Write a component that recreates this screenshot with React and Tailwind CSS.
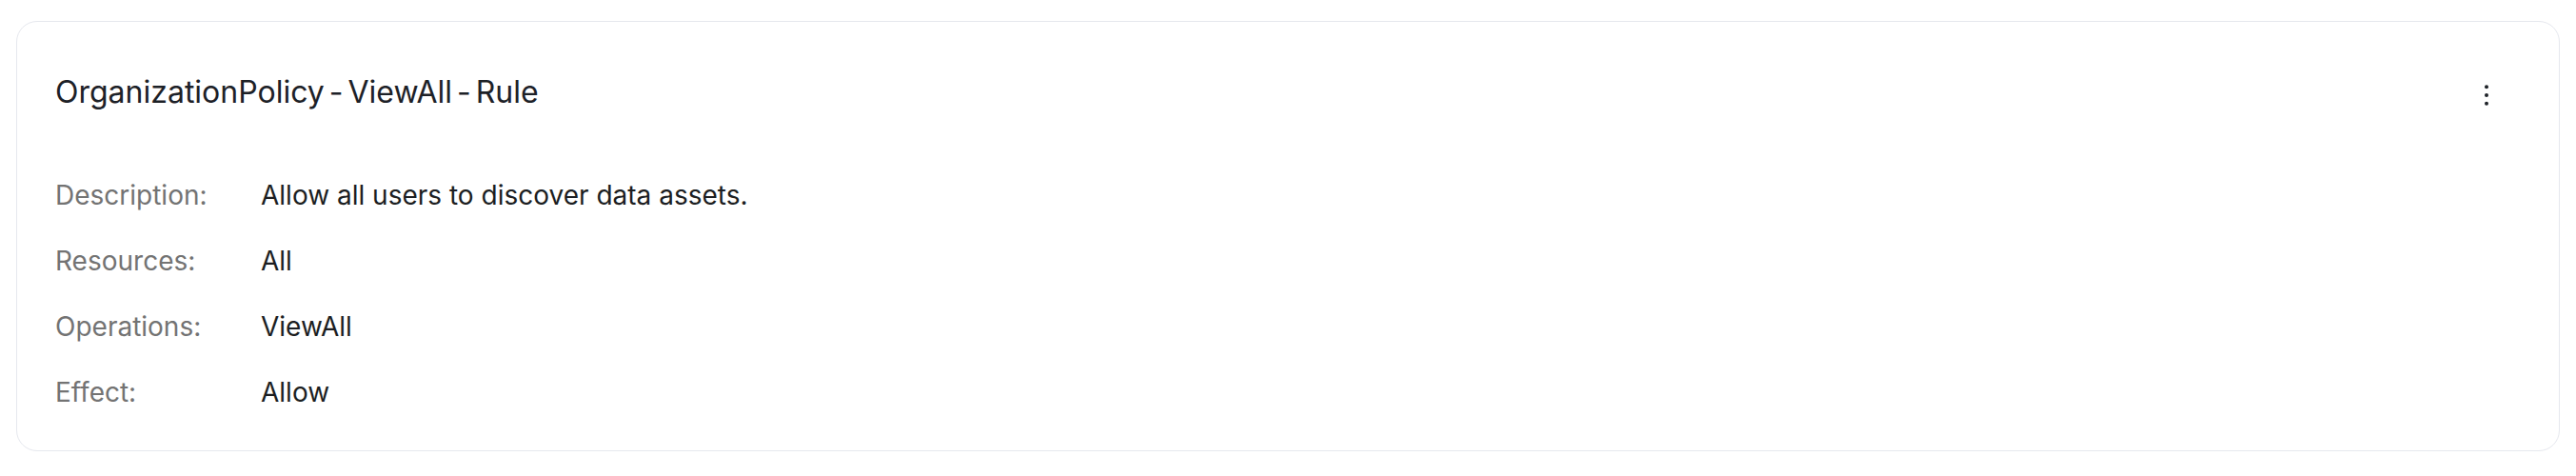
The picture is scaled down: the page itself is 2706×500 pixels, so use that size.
import { useState } from 'react';

const rule = {
  name: ['OrganizationPolicy', 'ViewAll', 'Rule'],
  description: 'Allow all users to discover data assets.',
  resources: 'All',
  operations: 'ViewAll',
  effect: 'Allow',
};

function KebabIcon() {
  return (
    <svg width="20" height="28" viewBox="0 0 20 28" fill="#1f2329">
      <circle cx="10" cy="5.3" r="2" />
      <circle cx="10" cy="14" r="2" />
      <circle cx="10" cy="22.7" r="2" />
    </svg>
  );
}

function Field({ label, value }) {
  return (
    <div className="flex items-center h-[36px] text-[28px] leading-[36px]">
      <span className="w-[216px] shrink-0 text-[#737373]">{label}</span>
      <span className="text-[#1c1e22]">{value}</span>
    </div>
  );
}

export default function App() {
  const [menuOpen, setMenuOpen] = useState(false);

  return (
    <div className="min-h-[500px] bg-white px-[17px] pt-[22px] font-['Inter','Noto_Sans',sans-serif]">
      <div className="border border-[#e6e8ee] rounded-[22px] px-10 pt-10 pb-[43px] bg-white">
        {/* Header */}
        <div className="flex items-center justify-between h-[67px]">
          <h2 className="text-[32px] leading-[38px] font-normal text-[#1d2127]">
            {rule.name.map((part, i) => (
              <span key={part}>
                {i > 0 && <span className="mx-[5px]">-</span>}
                {part}
              </span>
            ))}
          </h2>
          <button
            onClick={() => setMenuOpen(o => !o)}
            className="mr-[26px] mt-[7px] flex items-center justify-center"
            title="More"
          >
            <KebabIcon />
          </button>
        </div>

        {/* Details */}
        <div className="mt-[57px] flex flex-col gap-[33px]">
          <Field label="Description:" value={rule.description} />
          <Field label="Resources:" value={rule.resources} />
          <Field label="Operations:" value={rule.operations} />
          <Field label="Effect:" value={rule.effect} />
        </div>
      </div>
    </div>
  );
}
